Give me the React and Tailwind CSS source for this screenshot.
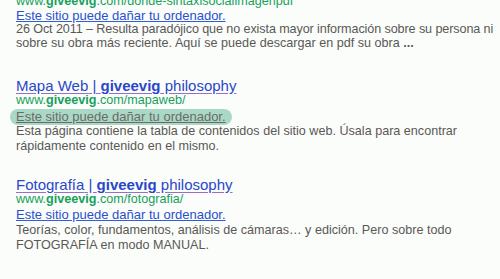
import React from 'react';

const font = { fontFamily: '"Liberation Sans", Arial, sans-serif' };

const Warning = ({ highlighted, className = 'h-[16px] leading-[16px]' }) =>
  highlighted ? (
    <div className={className}>
      <span className="-ml-[6px] inline-block rounded-full bg-[#a9d9c6] px-[6px] text-[13px] text-[#6d6a66] underline decoration-[#6d6a66]">
        Este sitio puede dañar tu ordenador.
      </span>
    </div>
  ) : (
    <div className={`${className} text-[13px]`}>
      <a className="text-[#2a4fcf] underline decoration-[#2f5fd8]">Este sitio puede dañar tu ordenador.</a>
    </div>
  );

const Result = ({ title, path, snippet, highlighted, className }) => (
  <div className={className}>
    <div className="h-[15px] text-[15px] leading-[15px]">
      <a className="text-[#2a47c9] underline decoration-[#9b6bd3] underline-offset-[2px]">
        {title} | <b>giveevig</b> philosophy
      </a>
    </div>
    <div className="h-[15px] text-[12.6px] leading-[15px] text-[#17a05a]">
      www.<b>giveevig</b>.com/{path}
    </div>
    <Warning highlighted={highlighted} />
    <div className="whitespace-nowrap text-[12.6px] leading-[15px] text-[#5a5855]">{snippet}</div>
  </div>
);

export default function App() {
  return (
    <div className="h-[279px] w-[500px] overflow-hidden bg-[#fbfdfb] pl-[16px]" style={font}>
      <div className="-mt-[6px]">
        <div className="h-[14px] text-[12.6px] leading-[14px] text-[#17a05a]">
          www.<b>giveevig</b>.com/donde-sintaxisocialimagenpdf
        </div>
        <Warning className="h-[14px] leading-[16px]" />
        <div className="whitespace-nowrap text-[12.6px] leading-[14px] text-[#5a5855]">
          <span className="tracking-[-0.1px]">
            26 Oct 2011 – Resulta paradójico que no exista mayor información sobre su persona ni
          </span>
          <br />
          sobre su obra más reciente. Aquí se puede descargar en pdf su obra <b>...</b>
        </div>
      </div>
      <Result
        className="mt-[28px]"
        title="Mapa Web"
        path="mapaweb/"
        highlighted
        snippet={
          <>
            Esta página contiene la tabla de contenidos del sitio web. Úsala para encontrar
            <br />
            rápidamente contenido en el mismo.
          </>
        }
      />
      <Result
        className="mt-[23px]"
        title="Fotografía"
        path="fotografia/"
        snippet={
          <>
            Teorías, color, fundamentos, análisis de cámaras… y edición. Pero sobre todo
            <br />
            FOTOGRAFÍA en modo MANUAL.
          </>
        }
      />
    </div>
  );
}
